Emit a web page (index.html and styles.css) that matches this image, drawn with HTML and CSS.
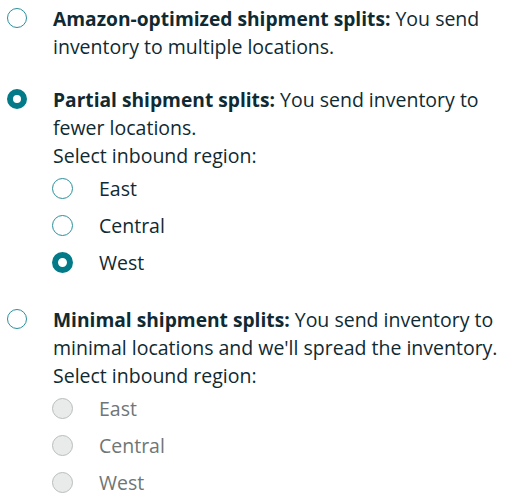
FILE: index.html
```html
<!DOCTYPE html>
<html>
<head>
<meta charset="utf-8">
<link rel="stylesheet" href="styles.css">
</head>
<body>
<div class="options">
  <div class="option">
    <span class="radio"></span>
    <div class="content">
      <p class="desc"><b>Amazon-optimized shipment splits:</b> You send inventory to multiple locations.</p>
    </div>
  </div>
  <div class="option">
    <span class="radio checked"></span>
    <div class="content">
      <p class="desc"><b>Partial shipment splits:</b> You send inventory to fewer locations.</p>
      <p class="desc">Select inbound region:</p>
      <div class="sub">
        <div class="sub-row"><span class="radio"></span><span class="label">East</span></div>
        <div class="sub-row"><span class="radio"></span><span class="label">Central</span></div>
        <div class="sub-row"><span class="radio checked"></span><span class="label">West</span></div>
      </div>
    </div>
  </div>
  <div class="option">
    <span class="radio"></span>
    <div class="content">
      <p class="desc"><b>Minimal shipment splits:</b> You send inventory to minimal locations and we'll spread the inventory.</p>
      <p class="desc">Select inbound region:</p>
      <div class="sub disabled">
        <div class="sub-row"><span class="radio"></span><span class="label">East</span></div>
        <div class="sub-row"><span class="radio"></span><span class="label">Central</span></div>
        <div class="sub-row"><span class="radio"></span><span class="label">West</span></div>
      </div>
    </div>
  </div>
</div>
</body>
</html>
```
FILE: styles.css
```css
html, body {
  margin: 0;
  padding: 0;
  background: #ffffff;
  overflow: hidden;
}
body {
  font-family: "Open Sans", "Noto Sans", sans-serif;
  font-size: 19.5px;
  line-height: 28px;
  color: #0f2a33;
}
.options {
  display: flex;
  flex-direction: column;
  gap: 25px;
  padding: 5px 0 0 7px;
}
.option {
  display: flex;
  gap: 26px;
  align-items: flex-start;
}
.option > .radio {
  margin-top: 3px;
}
.content {
  width: 452px;
}
.desc {
  margin: 0;
}
.desc b {
  font-weight: 700;
  font-size: 19.2px;
}
.radio {
  flex: none;
  box-sizing: border-box;
  width: 20px;
  height: 20px;
  border-radius: 50%;
  border: 1.5px solid #2b8f9c;
  background: #ffffff;
}
.radio.checked {
  border: 6px solid #037a88;
}
.sub {
  display: flex;
  flex-direction: column;
}
.sub-row {
  height: 37px;
  display: flex;
  align-items: center;
  gap: 26px;
  margin-left: -1px;
}
.sub .radio {
  width: 21px;
  height: 21px;
}
.sub.disabled .radio {
  border: 1.5px solid #b9bdbd;
  background: #e9ebeb;
}
.sub.disabled .label {
  color: #6f7676;
}
```
